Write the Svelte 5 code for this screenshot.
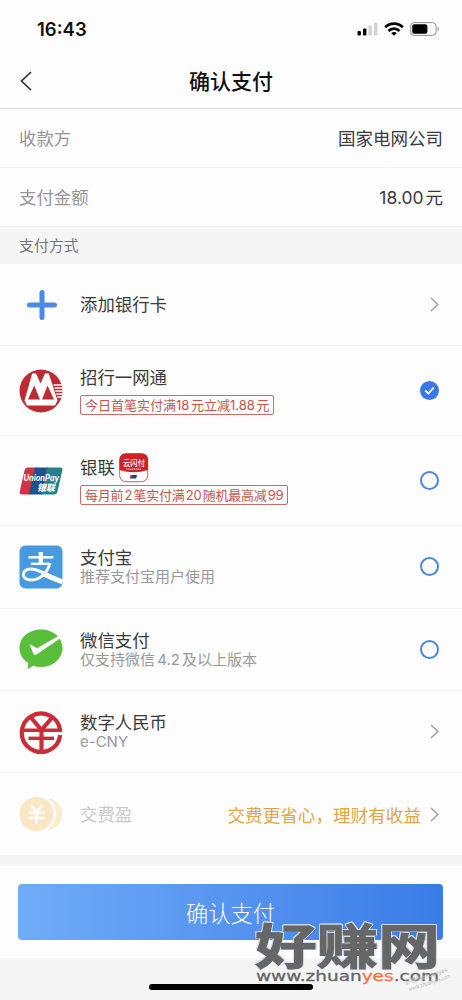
<script lang="ts">
  type methodType = {
    id: string,
    name: string,
    note?: string,
    promo?: string,
    tail: 'arrow' | 'radio',
    extra?: string,
    tall?: boolean,
    disabled?: boolean
  }

  const bills = [
    { label: '收款方', value: '国家电网公司' },
    { label: '支付金额', value: '18.00 元' }
  ];

  const methods: methodType[] = [
    { id: 'add', name: '添加银行卡', tail: 'arrow' },
    { id: 'cmb', name: '招行一网通', promo: '今日首笔实付满18 元立减1.88 元', tail: 'radio', tall: true },
    { id: 'union', name: '银联', promo: '每月前 2 笔实付满 20 随机最高减 99', tail: 'radio', tall: true },
    { id: 'alipay', name: '支付宝', note: '推荐支付宝用户使用', tail: 'radio' },
    { id: 'wechat', name: '微信支付', note: '仅支持微信 4.2 及以上版本', tail: 'radio' },
    { id: 'ecny', name: '数字人民币', note: 'e-CNY', tail: 'arrow' },
    { id: 'yield', name: '交费盈', tail: 'arrow', extra: '交费更省心，理财有收益', disabled: true }
  ];

  let selected = $state('cmb');

  function choose(item: methodType): void {
    if (item.tail === 'radio') {
      selected = item.id;
    }
  }
</script>

<div class="screen" lang="zh-CN">
  <div class="status">
    <span class="time">16:43</span>
    <div class="indicators">
      <svg width="21" height="14" viewBox="0 0 21 14">
        <rect x="0.5" y="9" width="3.4" height="4.5" rx="1" />
        <rect x="6" y="6.5" width="3.4" height="7" rx="1" />
        <rect x="11.5" y="3.5" width="3.4" height="10" rx="1" fill="#d2d2d2" />
        <rect x="17" y="0.5" width="3.4" height="13" rx="1" fill="#d2d2d2" />
      </svg>
      <svg width="20" height="14" viewBox="0 0 20 14" fill="none" stroke="#000" stroke-width="2.8">
        <path d="M1.2 5.3A12.6 12.6 0 0 1 18.8 5.3" />
        <path d="M4.5 8.9A7.9 7.9 0 0 1 15.5 8.9" />
        <path d="M10 13.8L7.2 11.2A3.8 3.8 0 0 1 12.8 11.2Z" fill="#000" stroke="none" />
      </svg>
      <svg width="30" height="14" viewBox="0 0 30 14">
        <rect x="0.6" y="0.6" width="25.5" height="12.8" rx="3.6" fill="none" stroke="#909090" />
        <rect x="2.2" y="2.2" width="15.2" height="9.6" rx="2.2" />
        <path d="M27.6 5v4.2c1.8-.6 1.8-3.6 0-4.2z" fill="#909090" />
      </svg>
    </div>
  </div>

  <header class="nav">
    <button class="back" aria-label="返回">
      <svg width="12" height="20" viewBox="0 0 12 20" fill="none" stroke="#333" stroke-width="1.7">
        <path d="M11 1L1.5 10L11 19" />
      </svg>
    </button>
    <h1>确认支付</h1>
  </header>

  {#each bills as bill}
    <div class="bill">
      <span class="label">{bill.label}</span>
      <span class="value">{bill.value}</span>
    </div>
  {/each}

  <div class="section">支付方式</div>

  {#each methods as item}
    <div class="method" class:tall={item.tall} class:disabled={item.disabled}>
      <div class="logo">
        {#if item.id === 'add'}
          <svg width="44" height="44" viewBox="0 0 44 44" stroke="#4b8ae6" stroke-width="5" stroke-linecap="round">
            <path d="M23 9.5v25M10.5 22h25" />
          </svg>
        {:else if item.id === 'cmb'}
          <svg width="44" height="44" viewBox="0 0 44 44">
            <circle cx="22" cy="22" r="21.5" fill="#bd2b34" />
            <path d="M5.500 31.500L13.200 4.500H17L21.500 14.500L26 4.500H29.800L38.500 31.500L36 36.500H8Z" fill="#fff" />
            <path d="M9 30.500L15.200 16.500L21 30.500ZM23 30.500L28.500 16.500L35 30.500Z" fill="#bd2b34" />
            <path d="M34.500 16H43M35.500 19H44M36.300 22H44M37.300 25H44M38.200 28H43.500" stroke="#fff" stroke-width="1.4" />
          </svg>
        {:else if item.id === 'union'}
          <svg width="44" height="28" viewBox="0 0 44 28">
            <path d="M9 .5H17L11 27.5H3Q0 27.5 .7 24.5L5.5 3.5Q6.2 .5 9 .5Z" fill="#cf3442" />
            <path d="M16 .5H29L23 27.5H10Z" fill="#1d5290" />
            <path d="M28 .5H41Q44 .5 43.3 3.5L38.5 24.5Q37.8 27.5 35 27.5H22Z" fill="#23818a" />
            <text x="4.5" y="14" class="union-en" textLength="35.5" lengthAdjust="spacingAndGlyphs">UnionPay</text>
            <text x="18" y="23.5" class="union-cn" textLength="18" lengthAdjust="spacingAndGlyphs">银联</text>
          </svg>
        {:else if item.id === 'alipay'}
          <svg width="44" height="44" viewBox="0 0 44 44">
            <rect x="0.5" y="0.5" width="43" height="43" rx="6" fill="#489ae0" />
            <g fill="none" stroke="#fff">
              <path d="M21.8 7V18" stroke-width="4.2" />
              <path d="M9.5 12.3H34.5" stroke-width="2.4" />
              <path d="M12 18.8H30.5" stroke-width="2.3" />
              <path d="M31 18C29 26 22 35 12.5 35C6.5 35 4 32 4.5 28.8C5 25.5 9 23.3 14.5 24.2C20 25.1 28 29.5 43.5 36" stroke-width="3" />
              <path d="M25 29.5Q33 33.5 43.5 37" stroke-width="4.5" />
            </g>
          </svg>
        {:else if item.id === 'wechat'}
          <svg width="44" height="42" viewBox="0 0 44 42">
            <path d="M22 1.5C34 1.5 43.5 9.5 43.5 20S34 39 22 39Q17.5 39 14 37.7L8.5 41.3L9.3 35.2C4 31.8 .5 26.5 .5 20C.5 9.5 10 1.5 22 1.5Z" fill="#59be39" />
            <path d="M10.5 16.8Q11 16 12 16.7L18 20.2L38.5 8.6Q40.5 8.6 41.5 10.2L17.5 26.6Q15.5 27.8 14.5 25.8Z" fill="#fff" />
          </svg>
        {:else if item.id === 'ecny'}
          <svg width="44" height="44" viewBox="0 0 44 44" fill="none" stroke="#c92e36" stroke-width="4.2">
            <path d="M41.2 20.5A19.3 19.3 0 1 0 41.2 25" />
            <path d="M11.5 7L22.5 20L33.5 7" />
            <path d="M3.5 20.3H43" stroke-width="3.4" />
            <path d="M9.5 28.3H35" stroke-width="3.4" />
            <path d="M7 24.3H36" stroke="#fff" stroke-width="1.6" />
            <path d="M22.5 19V41" />
          </svg>
        {:else}
          <svg width="44" height="36" viewBox="0 0 44 36">
            <circle cx="27" cy="18" r="16" fill="#fbebcd" />
            <circle cx="18" cy="18" r="19" fill="#fdfdfd" />
            <circle cx="17.5" cy="18" r="17" fill="#fae6c3" />
            <path d="M11.5 8.5L17.5 16L23.5 8.5M17.5 16V28M9.5 16.8H25.5M9.5 22H25.5" fill="none" stroke="#fff" stroke-width="2.6" />
          </svg>
        {/if}
      </div>

      <div class="info">
        <div class="name">
          {item.name}
          {#if item.id === 'union'}
            <svg class="quickpass" width="30" height="30" viewBox="0 0 30 30">
              <rect x="0.7" y="0.7" width="28" height="28" rx="6" fill="#fff" stroke="#c6625e" />
              <path d="M7 .5H22.5Q29 .5 29 7V17Q15 21.5 .5 17V7Q.5 .5 7 .5Z" fill="#cf2027" />
              <text x="4" y="12.6" class="pass-text" textLength="22" lengthAdjust="spacingAndGlyphs">云闪付</text>
              <path d="M7 16.2H22" stroke="#f2b6b4" stroke-width="1.2" stroke-dasharray="1.5 .5" />
              <path d="M12.5 22H18L17.2 25.5H11.7Z" fill="#244a73" />
              <path d="M11.5 22H13L12.2 25.5H10.7Z" fill="#c93440" />
            </svg>
          {/if}
        </div>
        {#if item.note}
          <div class="note">{item.note}</div>
        {/if}
        {#if item.promo}
          <div class="promo {item.id}">{item.promo}</div>
        {/if}
      </div>

      {#if item.extra}
        <span class="extra">{item.extra}</span>
      {/if}

      {#if item.tail === 'arrow'}
        <svg class="arrow" width="9" height="15" viewBox="0 0 9 15" fill="none" stroke="#a3a3a3" stroke-width="1.6">
          <path d="M1 1L7.8 7.5L1 14" />
        </svg>
      {:else}
        <button class="radio" class:on={selected === item.id} aria-label={item.name} onclick={() => choose(item)}>
          {#if selected === item.id}
            <svg width="19" height="19" viewBox="0 0 19 19" fill="none" stroke="#fff" stroke-width="1.8">
              <path d="M5.2 9.5L8.3 12.5L13.8 6.7" />
            </svg>
          {/if}
        </button>
      {/if}
    </div>
  {/each}

  <div class="submit">
    <button class="pay">确认支付</button>
  </div>

  <footer>
    <div class="home"></div>
  </footer>

  <svg class="watermark" width="216" height="84" viewBox="0 0 216 84">
    <text x="9" y="47.5" class="site" textLength="185" lengthAdjust="spacingAndGlyphs">好赚网</text>
    <text x="10" y="64.5" class="url" textLength="183" lengthAdjust="spacingAndGlyphs">www.zhuan<tspan class="hot">yes</tspan>.com</text>
    <g class="stamp" transform="translate(160 69) rotate(-18)">
      <text x="0" y="0" textLength="44" lengthAdjust="spacingAndGlyphs">好赚网zhuanyes</text>
      <text x="1" y="7" textLength="44" lengthAdjust="spacingAndGlyphs">www.zhuanyes.com</text>
    </g>
  </svg>
</div>

<style>
  :global(body) {
    background: #fdfdfd;
  }

  .screen {
    position: relative;
    width: 462px;
    height: 1000px;
    overflow: hidden;
    background: #fdfdfd;
    color: #3a3a3a;
    font-family: Inter, "Noto Sans CJK SC", sans-serif;
    font-size: 17.4px;
  }

  button {
    padding: 0;
    border: none;
    background: none;
    font-family: inherit;
  }

  svg {
    display: block;
    flex: none;
  }

  .status {
    box-sizing: border-box;
    display: flex;
    justify-content: space-between;
    align-items: center;
    height: 58px;
    padding: 0 22px 0 37px;
  }

  .time {
    color: #111;
    font-size: 18.5px;
    font-weight: 600;
  }

  .indicators {
    display: flex;
    gap: 6px;
  }

  .nav {
    box-sizing: border-box;
    display: grid;
    grid-template-columns: 60px 1fr 60px;
    align-items: center;
    height: 51px;
    padding-bottom: 4px;
    border-bottom: 1px solid #dcdcdc;
  }

  .back {
    padding-left: 20px;
  }

  h1 {
    margin: 0;
    padding-top: 2px;
    color: #111;
    font-size: 21px;
    font-weight: 500;
    line-height: 30px;
    text-align: center;
  }

  .bill {
    box-sizing: border-box;
    display: flex;
    justify-content: space-between;
    align-items: center;
    height: 59px;
    padding: 0 19px 2px;
    border-bottom: 1px solid #f1f1f1;
  }

  .label {
    color: #969696;
  }

  .value {
    font-size: 17.5px;
    word-spacing: -3px;
  }

  .section {
    height: 37px;
    padding-left: 19px;
    background: #f5f5f5;
    color: #757575;
    font-size: 14.9px;
    line-height: 38px;
  }

  .method {
    box-sizing: border-box;
    display: flex;
    align-items: center;
    height: 82.3px;
    padding: 0 23px 0 19px;
    border-bottom: 1px solid #f3f3f3;
  }

  .tall {
    height: 90px;
  }

  .logo {
    width: 61px;
  }

  .info {
    flex: 1;
    padding-top: 1px;
  }

  .tall .info {
    padding-top: 2px;
  }

  .name {
    display: flex;
    align-items: center;
    gap: 4px;
    height: 20px;
    line-height: 20px;
    white-space: nowrap;
  }

  .quickpass {
    margin: -6px 0;
  }

  .note {
    color: #999;
    font-size: 15px;
    line-height: 18px;
    word-spacing: -2px;
  }

  .promo {
    box-sizing: border-box;
    width: max-content;
    height: 20px;
    margin-top: 7px;
    padding: 0 4px;
    border: 1px solid #c96d67;
    border-radius: 2px;
    color: #c2554d;
    font-size: 13px;
    line-height: 18px;
    white-space: nowrap;
    word-spacing: -2px;
  }

  .promo.union {
    letter-spacing: -0.28px;
  }

  .extra {
    margin-right: 9px;
    color: #dfa647;
    font-size: 17.6px;
  }

  .disabled {
    border-bottom: none;
  }

  .disabled .name {
    color: #c9c9c9;
  }

  .radio {
    box-sizing: border-box;
    width: 19px;
    height: 19px;
    border: 2px solid #4d87dc;
    border-radius: 50%;
  }

  .radio.on {
    border: none;
    background: #3978e4;
  }

  .submit {
    box-sizing: border-box;
    height: 102.5px;
    padding: 18px 18px 0;
    border-top: 11px solid #f5f5f5;
  }

  .pay {
    width: 425px;
    height: 56px;
    border-radius: 4px;
    background: linear-gradient(90deg, #71acf8, #3a7ce7);
    color: #fff;
    font-size: 22.3px;
    font-weight: 300;
  }

  footer {
    height: 42px;
    padding-top: 26px;
    background: #f5f5f5;
  }

  .home {
    width: 164px;
    height: 6px;
    margin: 0 auto;
    border-radius: 3px;
    background: #000;
  }

  .watermark {
    position: absolute;
    left: 246px;
    top: 916px;
  }

  .site {
    fill: #666;
    stroke: #666;
    stroke-width: 1px;
    font-family: "Noto Sans CJK SC", sans-serif;
    font-size: 48px;
    font-weight: 700;
    filter: drop-shadow(1px 0 0 #cfd9ea) drop-shadow(-1px 0 0 #cfd9ea) drop-shadow(0 -1px 0 #cfd9ea);
  }

  .url {
    fill: #666;
    font-family: "DejaVu Sans", sans-serif;
    font-size: 14px;
    stroke: #666;
    stroke-width: 0.3px;
  }

  .hot {
    fill: #f0714c;
    stroke: #f0714c;
  }

  .stamp {
    fill: #bcbcbc;
    font-size: 6px;
  }

  .union-en {
    fill: #fff;
    font-size: 9px;
    font-style: italic;
    font-weight: 700;
  }

  .union-cn {
    fill: #fff;
    font-size: 9px;
    font-style: italic;
    font-weight: 900;
  }

  .pass-text {
    fill: #fff;
    font-size: 8px;
    font-weight: 500;
  }
</style>
